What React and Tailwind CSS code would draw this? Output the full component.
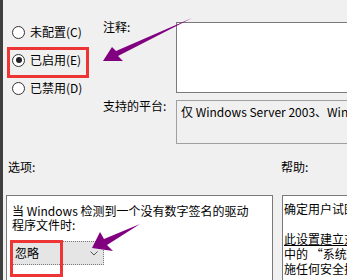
import React from "react";

// Group Policy editor fragment: driver code signing setting
const Radio = ({ checked, label }) => (
  <div className="flex items-center h-[28px]">
    <span className="w-[13px] h-[13px] rounded-full border border-[#333] bg-white flex items-center justify-center shrink-0">
      {checked && <span className="w-[6px] h-[6px] rounded-full bg-[#222]" />}
    </span>
    <span className="ml-[5px] text-[12px] leading-[14px]">{label}</span>
  </div>
);

export default function App() {
  return (
    <div className="relative w-[347px] h-[280px] overflow-hidden bg-[#f0f0f0] text-black flex font-['Noto_Sans_CJK_SC','Noto_Sans',sans-serif]">
      <div className="w-[3px] bg-[#3f3f3f] shrink-0" />
      <div className="flex-1 flex flex-col">
        {/* top: state radios + comment/platform */}
        <div className="flex h-[150px] shrink-0">
          <div className="w-[100px] pl-[9px] pt-[18px] flex flex-col">
            <Radio label="未配置(C)" />
            <Radio label="已启用(E)" checked />
            <Radio label="已禁用(D)" />
          </div>
          <div className="flex-1 flex flex-col pt-[22px]">
            <div className="flex">
              <div className="w-[73px] text-[12px] leading-[12px] -mt-[1px]">注释:</div>
              <div className="w-[190px] h-[71px] bg-white border border-[#7a7a7a] shrink-0" />
            </div>
            <div className="flex mt-[7px]">
              <div className="w-[73px] text-[12px] leading-[12px]">支持的平台:</div>
              <div className="w-[190px] h-[44px] border border-[#a0a0a0] shrink-0 pl-[4px] pt-[4px] text-[12px] leading-[14px] whitespace-nowrap overflow-hidden">
                仅 Windows Server 2003、Windows XP
              </div>
            </div>
          </div>
        </div>

        {/* bottom: options + help */}
        <div className="flex pt-[11px] text-[12px] leading-[12px] shrink-0">
          <div className="w-[278px] pl-[5px]">选项:</div>
          <div>帮助:</div>
        </div>
        <div className="flex mt-[22px] shrink-0">
          <div className="ml-[3px] w-[267px] h-[100px] bg-white border border-[#7a7a7a] pl-[5px] pt-[8px] shrink-0">
            <div className="text-[12px] leading-[14px] whitespace-nowrap">当 Windows 检测到一个没有数字签名的驱动</div>
            <div className="text-[12px] leading-[14px]">程序文件时:</div>
            <div className="mt-[9px] w-[92px] h-[24px] bg-[#e5e5e5] border border-dotted border-[#7a7a7a] flex items-center justify-between pl-[2px] pr-[5px]">
              <span className="text-[12px] leading-[14px]">忽略</span>
              <svg width="8" height="5" viewBox="0 0 8 5">
                <path d="M0.5 0.5 L4 4 L7.5 0.5" fill="none" stroke="#555" strokeWidth="1" />
              </svg>
            </div>
          </div>
          <div className="ml-[9px] w-[80px] h-[100px] bg-white border border-[#7a7a7a] pl-[1px] pt-[5px] shrink-0 overflow-hidden text-[12px] leading-[15px] whitespace-nowrap">
            <div>确定用户试图安装没有数字签名的</div>
            <div>&nbsp;</div>
            <div className="underline">此设置建立对没有签名的驱动</div>
            <div>中的 “系统”选项具有最高</div>
            <div>施任何安全措施</div>
          </div>
        </div>
      </div>

      {/* annotations */}
      <div className="absolute left-[7px] top-[47px] w-[82px] h-[31px] border-[3px] border-[#ee3535]" />
      <div className="absolute left-[10px] top-[240px] w-[53px] h-[37px] border-[3px] border-[#ee3535]" />
      <svg className="absolute left-0 top-0" width="347" height="280" viewBox="0 0 347 280">
        <polygon points="103,61 112,47 116,51 192,18 118,56 123,61" fill="#800080" />
        <polygon points="92,248 100,232 104,239 140,224 107,245 113,251" fill="#800080" />
      </svg>
    </div>
  );
}
